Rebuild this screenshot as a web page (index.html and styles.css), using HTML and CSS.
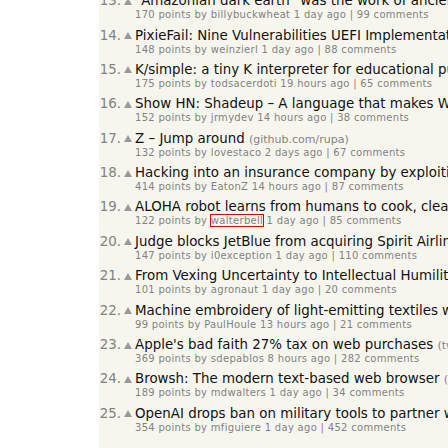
FILE: index.html
```html
<!DOCTYPE html>
<html>
<head>
<meta charset="utf-8">
<link rel="stylesheet" href="styles.css">
</head>
<body>
<div class="page">
  <ol class="stories">
    <li class="story"><div class="line"><span class="rank">13.</span><span class="vote"><svg class="arrow" viewBox="0 0 8 7"><path d="M4 0L8 7H0z"/></svg></span><span class="title">"Amazonian dark earth" was the work of ancient Amazonians, study finds</span></div><div class="sub">170 points by billybuckwheat 1 day ago | 99 comments</div></li>
    <li class="story"><div class="line"><span class="rank">14.</span><span class="vote"><svg class="arrow" viewBox="0 0 8 7"><path d="M4 0L8 7H0z"/></svg></span><span class="title">PixieFail: Nine Vulnerabilities UEFI Implementations</span></div><div class="sub">148 points by weinzierl 1 day ago | 88 comments</div></li>
    <li class="story"><div class="line"><span class="rank">15.</span><span class="vote"><svg class="arrow" viewBox="0 0 8 7"><path d="M4 0L8 7H0z"/></svg></span><span class="title">K/simple: a tiny K interpreter for educational purposes</span></div><div class="sub">175 points by todsacerdoti 19 hours ago | 65 comments</div></li>
    <li class="story"><div class="line"><span class="rank">16.</span><span class="vote"><svg class="arrow" viewBox="0 0 8 7"><path d="M4 0L8 7H0z"/></svg></span><span class="title">Show HN: Shadeup – A language that makes WebGPU easier</span></div><div class="sub">152 points by jrmydev 14 hours ago | 38 comments</div></li>
    <li class="story"><div class="line"><span class="rank">17.</span><span class="vote"><svg class="arrow" viewBox="0 0 8 7"><path d="M4 0L8 7H0z"/></svg></span><span class="title">Z – Jump around <span class="site">(github.com/rupa)</span></span></div><div class="sub">132 points by lovestaco 2 days ago | 67 comments</div></li>
    <li class="story"><div class="line"><span class="rank">18.</span><span class="vote"><svg class="arrow" viewBox="0 0 8 7"><path d="M4 0L8 7H0z"/></svg></span><span class="title">Hacking into an insurance company by exploiting a bug</span></div><div class="sub">414 points by EatonZ 14 hours ago | 87 comments</div></li>
    <li class="story"><div class="line"><span class="rank">19.</span><span class="vote"><svg class="arrow" viewBox="0 0 8 7"><path d="M4 0L8 7H0z"/></svg></span><span class="title">ALOHA robot learns from humans to cook, clean, do laundry</span></div><div class="sub">122 points by <span class="boxed">walterbell</span> 1 day ago | 85 comments</div></li>
    <li class="story"><div class="line"><span class="rank">20.</span><span class="vote"><svg class="arrow" viewBox="0 0 8 7"><path d="M4 0L8 7H0z"/></svg></span><span class="title">Judge blocks JetBlue from acquiring Spirit Airlines</span></div><div class="sub">147 points by i0exception 1 day ago | 110 comments</div></li>
    <li class="story"><div class="line"><span class="rank">21.</span><span class="vote"><svg class="arrow" viewBox="0 0 8 7"><path d="M4 0L8 7H0z"/></svg></span><span class="title">From Vexing Uncertainty to Intellectual Humility</span></div><div class="sub">101 points by agronaut 1 day ago | 20 comments</div></li>
    <li class="story"><div class="line"><span class="rank">22.</span><span class="vote"><svg class="arrow" viewBox="0 0 8 7"><path d="M4 0L8 7H0z"/></svg></span><span class="title">Machine embroidery of light-emitting textiles with electronics</span></div><div class="sub">99 points by PaulHoule 13 hours ago | 21 comments</div></li>
    <li class="story"><div class="line"><span class="rank">23.</span><span class="vote"><svg class="arrow" viewBox="0 0 8 7"><path d="M4 0L8 7H0z"/></svg></span><span class="title">Apple's bad faith 27% tax on web purchases <span class="site">(twitter.com/tsweeney)</span></span></div><div class="sub">369 points by sdepablos 8 hours ago | 282 comments</div></li>
    <li class="story"><div class="line"><span class="rank">24.</span><span class="vote"><svg class="arrow" viewBox="0 0 8 7"><path d="M4 0L8 7H0z"/></svg></span><span class="title">Browsh: The modern text-based web browser <span class="site">(brow.sh)</span></span></div><div class="sub">189 points by mdwalters 1 day ago | 34 comments</div></li>
    <li class="story"><div class="line"><span class="rank">25.</span><span class="vote"><svg class="arrow" viewBox="0 0 8 7"><path d="M4 0L8 7H0z"/></svg></span><span class="title">OpenAI drops ban on military tools to partner with the Pentagon</span></div><div class="sub">354 points by mfiguiere 1 day ago | 452 comments</div></li>
  </ol>
</div>
</body>
</html>
```
FILE: styles.css
```css
html, body {
  margin: 0;
  padding: 0;
  background: #ffffff;
  height: 100%;
  overflow: hidden;
}
.page {
  margin-left: 99px;
  background: #f6f6ef;
  height: 100%;
  overflow: hidden;
  font-family: "DejaVu Sans", Verdana, sans-serif;
}
.stories {
  list-style: none;
  margin: -8.9px 0 0 0;
  padding: 0;
}
.story {
  height: 34.4px;
  white-space: nowrap;
}
.line {
  display: flex;
  align-items: center;
  height: 19px;
  font-size: 13.4px;
}
.rank {
  width: 22px;
  text-align: right;
  color: #828282;
  flex: none;
}
.vote {
  width: 14px;
  flex: none;
  display: flex;
  justify-content: center;
}
.arrow {
  width: 8px;
  height: 7px;
  fill: #9a9a9a;
  margin-top: 1px;
}
.title {
  color: #111111;
}
.site {
  color: #828282;
  font-size: 11px;
}
.sub {
  padding-left: 36px;
  font-size: 10px;
  letter-spacing: 0.3px;
  line-height: 10.4px;
  color: #828282;
}
.boxed {
  outline: 1px solid #e00000;
}
```
